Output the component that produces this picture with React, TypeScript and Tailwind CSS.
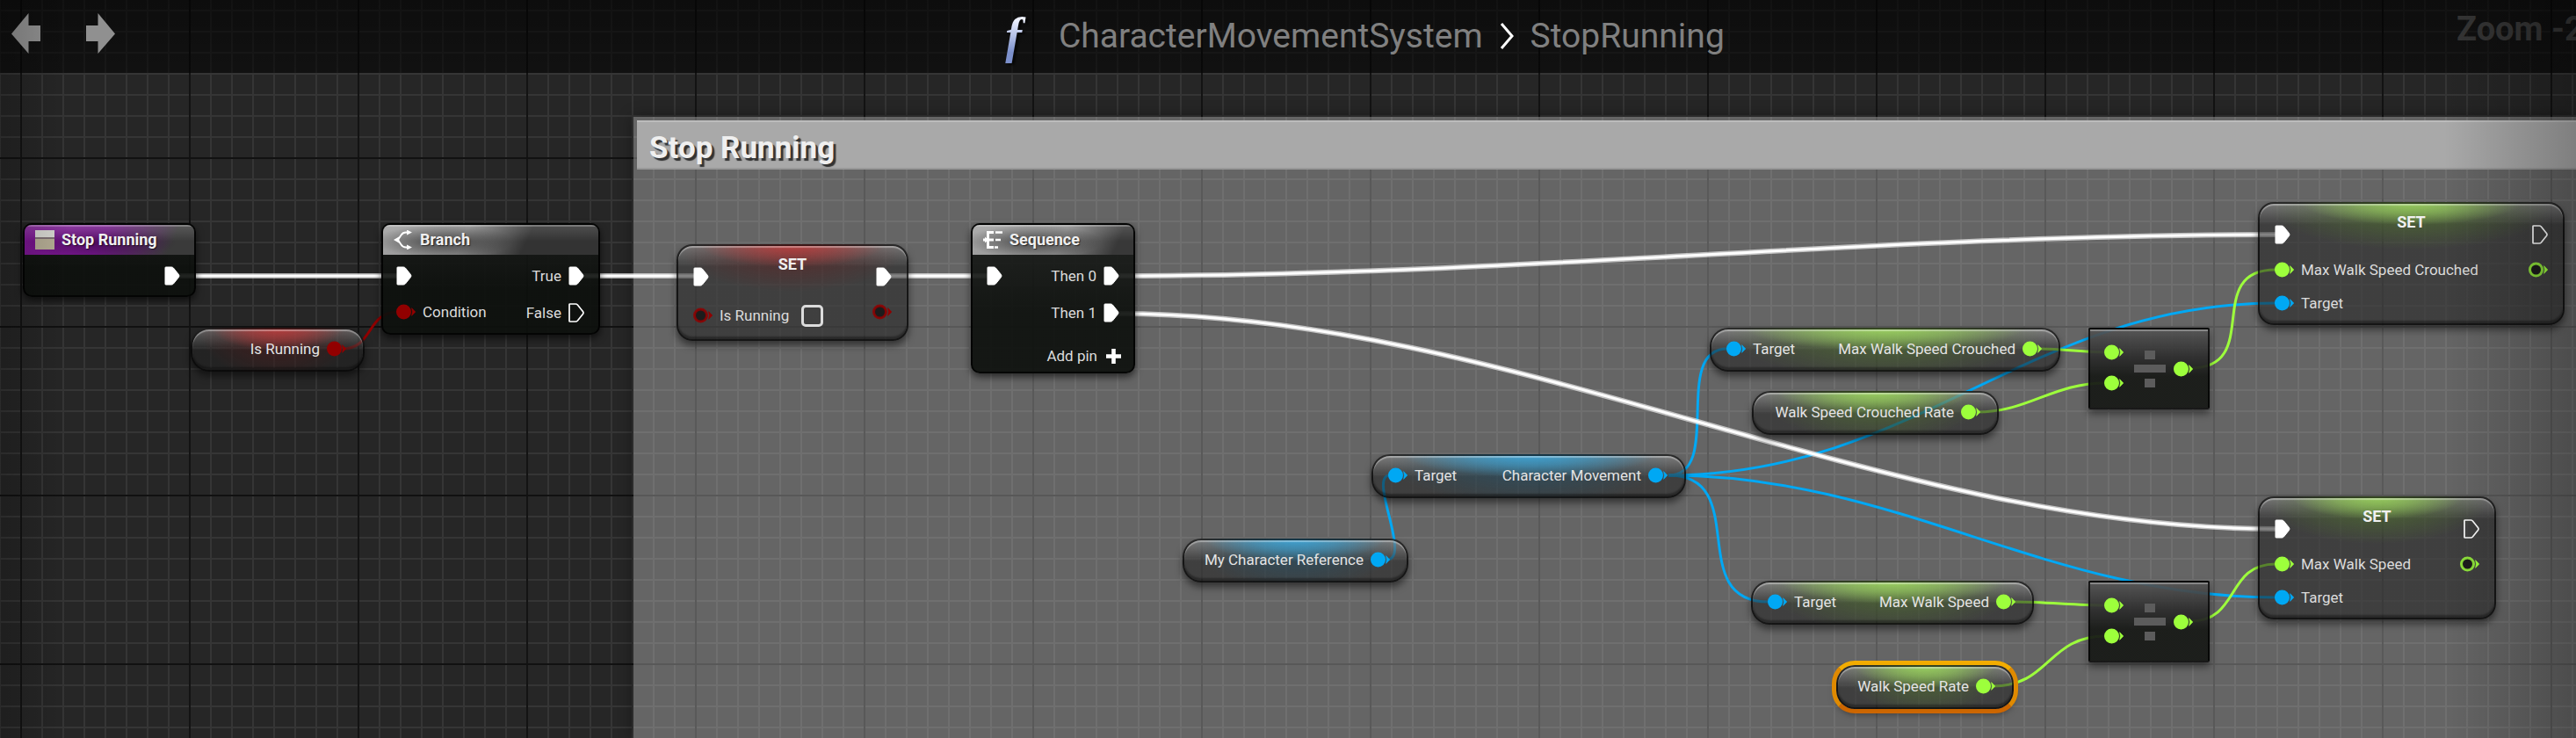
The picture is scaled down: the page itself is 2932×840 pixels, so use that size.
import type { ReactNode } from "react";
import clsx from "clsx";

const WHITE = "#ffffff";
const GREEN = "#9dff3c";
const BLUE = "#00a8f4";
const RED = "#920000";

type Wire = { d: string; color: string };

const execWires: string[] = [
  "M203 314 H452",
  "M663 314 H790",
  "M1011 314 H1124",
  "M1271 314 C1721 314 2140 267 2590 267",
  "M1271 357 C1721 357 2140 602 2590 602",
];

const dataWires: Wire[] = [
  { d: "M390 397 C425 397 417 355 453 355", color: RED },
  { d: "M1578 637 C1608 637 1556 541 1582 541", color: BLUE },
  { d: "M1899 541 C1962 541 1902 397 1966 397", color: BLUE },
  { d: "M1899 541 C1995 541 1916 685 2013 685", color: BLUE },
  { d: "M1899 541 C2180 541 2310 345 2590 345", color: BLUE },
  { d: "M1899 541 C2160 541 2330 680 2590 680", color: BLUE },
  { d: "M2321 397 C2350 397 2370 401 2397 401", color: GREEN },
  { d: "M2250 469 C2310 469 2335 436 2397 436", color: GREEN },
  { d: "M2493 419 C2577 419 2506 307 2590 307", color: GREEN },
  { d: "M2292 685 C2330 685 2360 689 2397 689", color: GREEN },
  { d: "M2268 781 C2334 781 2330 724 2397 724", color: GREEN },
  { d: "M2493 707 C2550 707 2533 642 2590 642", color: GREEN },
];

function Wires() {
  return (
    <svg className="pointer-events-none absolute inset-0 size-full" fill="none" aria-hidden="true">
      {dataWires.map((w) => (
        <path key={w.d} d={w.d} stroke={w.color} strokeWidth="3" />
      ))}
      {execWires.map((d) => (
        <g key={d}>
          <path d={d} stroke={WHITE} strokeOpacity="0.6" strokeWidth="6" />
          <path d={d} stroke={WHITE} strokeWidth="3" />
        </g>
      ))}
    </svg>
  );
}

function ExecPin({ open = false }: { open?: boolean }) {
  return (
    <svg className="h-[22px] w-[18px] shrink-0" viewBox="0 0 18 22" aria-hidden="true">
      <path
        d="M1 1.6Q1 1 1.8 1H8.2Q9.4 1 10.4 2L16.4 9.4Q17.6 11 16.4 12.6L10.4 20Q9.4 21 8.2 21H1.8Q1 21 1 20.4Z"
        fill={open ? "none" : WHITE}
        stroke={WHITE}
        strokeWidth={open ? 1.7 : 1}
      />
    </svg>
  );
}

function DataPin({ color, open = false }: { color: string; open?: boolean }) {
  return (
    <svg className="h-[18px] w-[22px] shrink-0" viewBox="0 0 22 18" aria-hidden="true">
      <path d="M17.6 4.6L21.8 9L17.6 13.4Q19 9 17.6 4.6Z" fill={color} stroke={color} strokeWidth="0.6" />
      {open ? (
        <circle cx="8.5" cy="9" r="7" fill="#1c1c1c" stroke={color} strokeWidth="3" strokeOpacity="0.85" />
      ) : (
        <circle cx="8.5" cy="9" r="8.5" fill={color} />
      )}
    </svg>
  );
}

function EventIcon() {
  return (
    <svg className="size-[22px]" viewBox="0 0 22 22" aria-hidden="true">
      <rect width="22" height="8" fill="#d5d5cf" />
      <rect y="8" width="22" height="2" fill="#7d6f72" />
      <rect y="10" width="22" height="12" fill="#b4ac94" />
    </svg>
  );
}

function BranchIcon() {
  return (
    <svg className="size-[22px]" viewBox="0 0 22 22" fill="none" stroke="#fff" strokeWidth="2" aria-hidden="true">
      <path d="M17 2.5H14Q10.5 2.5 8.6 5.5Q6.6 8.4 5 11Q6.6 13.6 8.6 16.5Q10.5 19.5 14 19.5H17" />
      <path d="M0 11L6 7.5V14.5Z" fill="#fff" stroke="none" />
      <path d="M15 -0.5L21 2.5L15 5.5ZM15 16.5L21 19.5L15 22.5Z" fill="#fff" stroke="none" />
    </svg>
  );
}

function SequenceIcon() {
  return (
    <svg className="size-[22px]" viewBox="0 0 22 22" fill="none" stroke="#fff" aria-hidden="true">
      <path d="M0 11H12" strokeWidth="3" />
      <path d="M12 2.5H5.5V19.5H12" strokeWidth="3" />
      <path d="M14 2.5H22M14 11H20M13 19.5H17" strokeWidth="2.4" />
      <path d="M2 7.5L6 11L2 14.5Z" fill="#fff" stroke="none" />
    </svg>
  );
}

const tones = {
  purple:
    "bg-[linear-gradient(rgba(255,255,255,0.16),transparent_55%),radial-gradient(ellipse_45%_55%_at_45%_60%,rgba(40,0,50,0.5),transparent),linear-gradient(115deg,#7a1590_0%,#73188a_45%,#3a3a3a_85%)]",
  gray: "bg-[linear-gradient(rgba(255,255,255,0.14),transparent_55%),radial-gradient(ellipse_32%_55%_at_28%_55%,rgba(30,30,30,0.65),transparent),linear-gradient(115deg,#a3a3a3_0%,#8a8a8a_38%,#333_66%)]",
  grayWide:
    "bg-[linear-gradient(rgba(255,255,255,0.14),transparent_55%),radial-gradient(ellipse_42%_55%_at_38%_55%,rgba(30,30,30,0.65),transparent),linear-gradient(115deg,#a3a3a3_0%,#8c8c8c_55%,#383838_88%)]",
};

function TitledNode(props: {
  className: string;
  tone: keyof typeof tones;
  icon: ReactNode;
  title: string;
  children: ReactNode;
}) {
  return (
    <section
      className={clsx(
        "absolute overflow-hidden rounded-[10px] border-2 border-black/80 bg-[linear-gradient(rgba(26,28,26,0.9),rgba(13,16,13,0.92)_60%)] shadow-[0_4px_9px_rgba(0,0,0,0.6)]",
        props.className,
      )}
    >
      <h2
        className={clsx(
          "flex h-[34px] items-center gap-2 pl-[12px] text-lg leading-5 font-bold text-[#f0f0f0] shadow-[inset_0_2px_0_rgba(255,255,255,0.25)] [text-shadow:1px_1px_1px_rgba(0,0,0,0.6)]",
          tones[props.tone],
        )}
      >
        {props.icon}
        {props.title}
      </h2>
      {props.children}
    </section>
  );
}

const pillGlow = {
  red: "bg-[radial-gradient(ellipse_38%_26px_at_50%_0,rgba(200,60,60,0.8),rgba(200,60,60,0.45)_50%,transparent),radial-gradient(ellipse_46%_60px_at_50%_0,rgba(120,20,20,0.45),transparent),linear-gradient(rgba(255,255,255,0.3),rgba(255,255,255,0)_26px),linear-gradient(rgba(34,34,34,0.56),rgba(34,34,34,0.56))]",
  green:
    "bg-[radial-gradient(ellipse_40%_26px_at_50%_0,rgba(165,225,100,0.8),rgba(165,225,100,0.45)_50%,transparent),radial-gradient(ellipse_46%_60px_at_50%_0,rgba(100,160,40,0.5),transparent),linear-gradient(rgba(255,255,255,0.34),rgba(255,255,255,0)_26px),linear-gradient(rgba(34,34,34,0.56),rgba(34,34,34,0.56))]",
  blue: "bg-[radial-gradient(ellipse_40%_26px_at_50%_0,rgba(60,175,230,0.8),rgba(60,175,230,0.45)_50%,transparent),radial-gradient(ellipse_46%_60px_at_50%_0,rgba(20,100,140,0.5),transparent),linear-gradient(rgba(255,255,255,0.34),rgba(255,255,255,0)_26px),linear-gradient(rgba(34,34,34,0.56),rgba(34,34,34,0.56))]",
};

const setGlow = {
  red: "bg-[radial-gradient(ellipse_40%_26px_at_50%_0,rgba(200,60,60,0.8),rgba(200,60,60,0.4)_50%,transparent),radial-gradient(ellipse_48%_46px_at_50%_8px,rgba(120,20,20,0.45),transparent),linear-gradient(rgba(255,255,255,0.3),rgba(255,255,255,0)_26px),linear-gradient(rgba(34,34,34,0.56),rgba(34,34,34,0.56))]",
  green:
    "bg-[radial-gradient(ellipse_36%_26px_at_50%_0,rgba(165,225,100,0.8),rgba(165,225,100,0.45)_50%,transparent),radial-gradient(ellipse_46%_46px_at_50%_8px,rgba(90,140,40,0.55),transparent),linear-gradient(rgba(255,255,255,0.3),rgba(255,255,255,0)_26px),linear-gradient(rgba(34,34,34,0.56),rgba(34,34,34,0.56))]",
};

const glass =
  "border-2 border-black/65 bg-origin-border shadow-[0_5px_9px_rgba(0,0,0,0.5),inset_0_2px_1px_rgba(255,255,255,0.35),inset_0_-3px_2px_rgba(0,0,0,0.35)]";

function Pill(props: {
  className: string;
  glow: keyof typeof pillGlow;
  label: string;
  color: string;
  target?: boolean;
  selected?: boolean;
}) {
  return (
    <section
      className={clsx(
        "absolute flex h-[50px] items-center rounded-[21px] pr-[19px] pb-[2px] pl-[17px] text-[#e4e4e4]",
        glass,
        pillGlow[props.glow],
        props.selected &&
          "before:absolute before:-inset-[7px] before:rounded-[26px] before:border-[5px] before:border-t-[#f2ac00] before:border-r-[#e08a00] before:border-b-[#cc6600] before:border-l-[#e08a00]",
        props.className,
      )}
    >
      {props.target && (
        <span className="flex items-center gap-2">
          <DataPin color={BLUE} />
          Target
        </span>
      )}
      <span className="ml-auto flex items-center gap-2">
        {props.label}
        <DataPin color={props.color} />
      </span>
    </section>
  );
}

function SetNode(props: { className: string; glow: keyof typeof setGlow; openOut?: boolean; children: ReactNode }) {
  return (
    <section
      className={clsx(
        "absolute rounded-[18px] px-[17px] pt-[10px]",
        glass,
        setGlow[props.glow],
        props.className,
      )}
    >
      <div className="flex h-[50px] items-center justify-between">
        <ExecPin />
        <h2 className="self-start pt-px text-lg leading-5 font-bold text-[#f0f0f0]">SET</h2>
        <ExecPin open={props.openOut} />
      </div>
      {props.children}
    </section>
  );
}

function SetSpeedNode({ className, label }: { className: string; label: string }) {
  return (
    <SetNode className={className} glow="green" openOut>
      <div className="flex h-[30px] items-center gap-2">
        <DataPin color={GREEN} />
        {label}
        <span className="ml-auto flex">
          <DataPin color={GREEN} open />
        </span>
      </div>
      <div className="mt-2 mb-[8px] flex h-[30px] items-center gap-2">
        <DataPin color={BLUE} />
        Target
      </div>
    </SetNode>
  );
}

function DivideNode({ className }: { className: string }) {
  return (
    <section
      aria-label="Divide"
      className={clsx(
        "absolute flex h-[93px] w-[138px] items-center rounded-[2px] border-2 border-black/70 bg-[linear-gradient(rgba(84,84,84,0.92),rgba(44,44,44,0.93)_36%,rgba(24,26,23,0.94)_60%)] pr-[17px] pl-[16px] shadow-[0_5px_8px_rgba(0,0,0,0.45),inset_0_2px_0_rgba(255,255,255,0.3)]",
        className,
      )}
    >
      <div className="flex flex-col gap-[17px] pb-[2px]">
        <DataPin color={GREEN} />
        <DataPin color={GREEN} />
      </div>
      <svg className="ml-[12px] h-[42px] w-[36px]" viewBox="0 0 36 42" fill="#5c5c5c" aria-hidden="true">
        <path d="M12 0H24V10H12ZM0 16H36V25H0ZM12 32H24V42H12Z" />
      </svg>
      <span className="ml-auto flex">
        <DataPin color={GREEN} />
      </span>
    </section>
  );
}

function HistoryArrow({ label, flip = false }: { label: string; flip?: boolean }) {
  return (
    <button type="button" aria-label={label} className="flex">
      <svg className={clsx("h-[48px] w-[34px]", flip && "-scale-x-100")} viewBox="0 0 34 48">
        <path d="M0 23.5L19.5 0V14H33V32H19.5V46Z" fill="#909090" />
      </svg>
    </button>
  );
}

export default function App() {
  return (
    <main className="relative isolate min-h-screen overflow-hidden bg-[#262626] font-[Roboto,sans-serif] text-[17px] leading-5 text-[#dcdcdc]">
      <div className="absolute inset-0 -z-30 bg-[linear-gradient(#353535_2px,transparent_2px),linear-gradient(90deg,#353535_2px,transparent_2px)] bg-size-[24px_24px] bg-position-[23px_11px]" />
      <div className="absolute inset-0 -z-30 bg-[linear-gradient(#111_2px,transparent_2px),linear-gradient(90deg,#131313_2px,transparent_2px)] bg-size-[192px_192px] bg-position-[23px_179px]" />

      <header className="flex h-[83px] items-start bg-[linear-gradient(rgba(0,0,0,0.66),rgba(0,0,0,0.55))]">
        <nav aria-label="History" className="flex gap-[50px] pt-[15px] pl-[13px]">
          <HistoryArrow label="Back" />
          <HistoryArrow label="Forward" flip />
        </nav>
        <div className="flex h-full flex-1 items-center justify-center pb-[2px] pl-[160px] text-[39px] leading-[44px] text-[#808080]">
          <span
            aria-hidden="true"
            className="mr-[22px] bg-linear-to-b from-[#eef1ff] from-20% to-[#7c90cc] to-80% bg-clip-text px-[20px] font-['Liberation_Serif',serif] text-[56px] leading-[62px] font-bold text-transparent italic drop-shadow-[3px_2px_1px_rgba(0,0,0,0.6)]"
          >
            f
          </span>
          <a href="#CharacterMovementSystem">CharacterMovementSystem</a>
          <svg className="mx-[19px] h-[30px] w-[16px]" viewBox="0 0 16 30" fill="none" aria-hidden="true">
            <path d="M2 1L14 15L2 29" stroke="#fff" strokeWidth="3" />
          </svg>
          <span>StopRunning</span>
        </div>
        <div className="-mr-[12px] w-[148px] pt-[11px] text-[38px] leading-[44px] font-bold whitespace-nowrap text-[#343434]">
          Zoom -2
        </div>
      </header>

      <section className="absolute top-[133px] right-0 bottom-0 left-[721px] -z-20 bg-[rgba(221,221,221,0.35)] pt-1 pl-1 shadow-[0_0_16px_rgba(0,0,0,0.4)]">
        <h1 className="flex h-14 items-center border-t-2 border-b-2 border-t-[#bcbcbc] border-b-[#989898] bg-[#a9a9a9] pt-[8px] pl-[14px] text-[35px] leading-10 font-bold text-[#efefef] [text-shadow:3px_3px_1px_#333]">
          Stop Running
        </h1>
      </section>

      <div className="absolute inset-0 -z-10">
        <Wires />
      </div>

      <TitledNode
        className="top-[254px] left-[26px] h-[84px] w-[197px]"
        tone="purple"
        icon={<EventIcon />}
        title="Stop Running"
      >
        <div className="flex h-[48px] items-center justify-end pr-[16px]">
          <ExecPin />
        </div>
      </TitledNode>

      <Pill className="top-[373px] left-[217px] w-[198px]" glow="red" label="Is Running" color={RED} />

      <TitledNode
        className="top-[254px] left-[434px] h-[127px] w-[249px]"
        tone="gray"
        icon={<BranchIcon />}
        title="Branch"
      >
        <div className="flex justify-between pr-[16px] pl-[15px]">
          <div>
            <div className="flex h-[48px] items-center">
              <ExecPin />
            </div>
            <div className="flex h-[34px] items-center gap-2">
              <DataPin color={RED} />
              Condition
            </div>
          </div>
          <div>
            <div className="flex h-[48px] items-center justify-end gap-2">
              True
              <ExecPin />
            </div>
            <div className="flex h-[36px] items-center justify-end gap-2">
              False
              <ExecPin open />
            </div>
          </div>
        </div>
      </TitledNode>

      <SetNode className="top-[278px] left-[770px] h-[110px] w-[264px]" glow="red">
        <div className="flex items-start justify-between">
          <label className="flex h-[38px] items-center gap-2">
            <DataPin color={RED} open />
            Is Running
            <input
              type="checkbox"
              className="ml-[6px] size-[25px] appearance-none rounded-[5px] border-[3px] border-[#dcdcdc] checked:bg-[#dcdcdc]"
            />
          </label>
          <div className="flex h-[30px] items-center">
            <DataPin color={RED} open />
          </div>
        </div>
      </SetNode>

      <TitledNode
        className="top-[254px] left-[1105px] h-[171px] w-[187px]"
        tone="grayWide"
        icon={<SequenceIcon />}
        title="Sequence"
      >
        <div className="flex h-[48px] items-center gap-2 pr-[16px] pl-[16px]">
          <ExecPin />
          <span className="ml-auto">Then 0</span>
          <ExecPin />
        </div>
        <div className="flex h-[36px] items-center justify-end gap-2 pr-[16px]">
          Then 1
          <ExecPin />
        </div>
        <button type="button" className="mt-[13px] mr-[14px] ml-auto flex h-[36px] items-center gap-[10px]">
          Add pin
          <svg className="size-[17px]" viewBox="0 0 17 17" aria-hidden="true">
            <path d="M8.5 0V17M0 8.5H17" stroke="#fff" strokeWidth="4.6" />
          </svg>
        </button>
      </TitledNode>

      <Pill
        className="top-[613px] left-[1346px] w-[257px]"
        glow="blue"
        label="My Character Reference"
        color={BLUE}
      />
      <Pill
        className="top-[517px] left-[1561px] w-[358px]"
        glow="blue"
        label="Character Movement"
        color={BLUE}
        target
      />
      <Pill
        className="top-[373px] left-[1946px] w-[399px]"
        glow="green"
        label="Max Walk Speed Crouched"
        color={GREEN}
        target
      />
      <Pill
        className="top-[445px] left-[1994px] w-[281px]"
        glow="green"
        label="Walk Speed Crouched Rate"
        color={GREEN}
      />
      <Pill
        className="top-[661px] left-[1993px] w-[322px]"
        glow="green"
        label="Max Walk Speed"
        color={GREEN}
        target
      />
      <Pill
        className="top-[757px] left-[2090px] w-[202px]"
        glow="green"
        label="Walk Speed Rate"
        color={GREEN}
        selected
      />

      <DivideNode className="top-[373px] left-[2377px]" />
      <DivideNode className="top-[661px] left-[2377px]" />

      <SetSpeedNode className="top-[230px] left-[2570px] w-[349px]" label="Max Walk Speed Crouched" />
      <SetSpeedNode className="top-[565px] left-[2570px] w-[271px]" label="Max Walk Speed" />

      <div className="pointer-events-none absolute inset-y-0 left-0 w-[80px] bg-linear-to-r from-black/20 to-transparent" />
      <div className="pointer-events-none absolute inset-y-0 right-0 w-[150px] bg-linear-to-l from-black/25 to-transparent" />
    </main>
  );
}
